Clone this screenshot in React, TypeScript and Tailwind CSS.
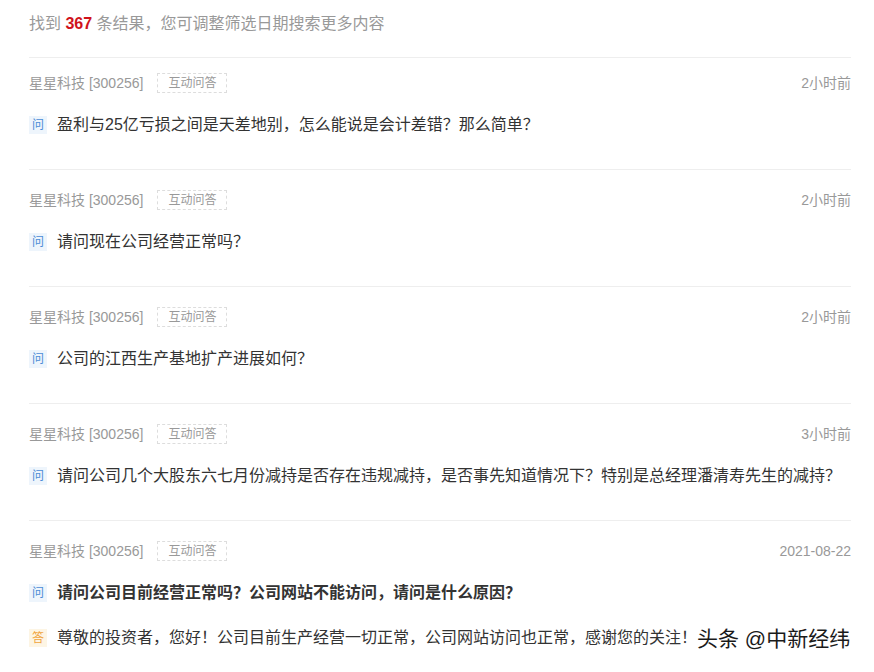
import React from "react";

const items = [
  { q: "盈利与25亿亏损之间是天差地别，怎么能说是会计差错？那么简单？", t: "2小时前" },
  { q: "请问现在公司经营正常吗？", t: "2小时前" },
  { q: "公司的江西生产基地扩产进展如何？", t: "2小时前" },
  { q: "请问公司几个大股东六七月份减持是否存在违规减持，是否事先知道情况下？特别是总经理潘清寿先生的减持？", t: "3小时前" },
];

function Meta({ t }: { t: string }) {
  return (
    <div className="flex h-5 items-center justify-between text-[14px] text-[#999]">
      <div className="flex items-center">
        <span>星星科技 [300256]</span>
        <span className="ml-[14px] flex h-5 items-center border border-dashed border-[#ddd] px-[10px] text-[12px] text-[#999]">
          互动问答
        </span>
      </div>
      <span>{t}</span>
    </div>
  );
}

function Badge({ kind }: { kind: "q" | "a" }) {
  return kind === "q" ? (
    <span className="flex h-[18px] w-[18px] shrink-0 items-center justify-center bg-[#eef5fc] text-[12px] font-normal text-[#4a8cd6]">
      问
    </span>
  ) : (
    <span className="flex h-[18px] w-[18px] shrink-0 items-center justify-center bg-[#fdf5e4] text-[12px] font-normal text-[#f0a43c]">
      答
    </span>
  );
}

export default function App() {
  return (
    <div
      className="relative h-[672px] w-[874px] overflow-hidden bg-white pl-[29px] pr-[23px]"
      style={{ fontFamily: '"Liberation Sans", "Noto Sans CJK SC", sans-serif' }}
    >
      <div className="flex h-[58px] items-start border-b border-[#eee] pt-[12px] text-[16px] leading-6 text-[#999]">
        <span>
          找到 <b className="font-bold text-[#d0131b]">367</b> 条结果，您可调整筛选日期搜索更多内容
        </span>
      </div>
      {items.map((it, i) => (
        <div
          key={i}
          className={`border-b border-[#eee] pb-[32px] ${i === 0 ? "pt-[15px]" : "pt-5"}`}
        >
          <Meta t={it.t} />
          <div className="mt-5 flex h-6 items-center gap-[10px] text-[16px] text-[#333]">
            <Badge kind="q" />
            <span>{it.q}</span>
          </div>
        </div>
      ))}
      <div className="pt-5">
        <Meta t="2021-08-22" />
        <div className="mt-5 flex h-6 items-center gap-[10px] text-[16px] font-bold text-[#333]">
          <Badge kind="q" />
          <span>请问公司目前经营正常吗？公司网站不能访问，请问是什么原因？</span>
        </div>
        <div className="mt-[21px] flex h-6 items-center gap-[10px] text-[16px] text-[#333]">
          <Badge kind="a" />
          <span>尊敬的投资者，您好！公司目前生产经营一切正常，公司网站访问也正常，感谢您的关注！</span>
        </div>
      </div>
      <div
        className="absolute left-[697px] top-[625px] whitespace-nowrap text-[21px] leading-7 text-[#1a1a1a]"
        style={{ textShadow: "0 0 2px #fff, 0 0 2px #fff" }}
      >
        头条 @中新经纬
      </div>
    </div>
  );
}
